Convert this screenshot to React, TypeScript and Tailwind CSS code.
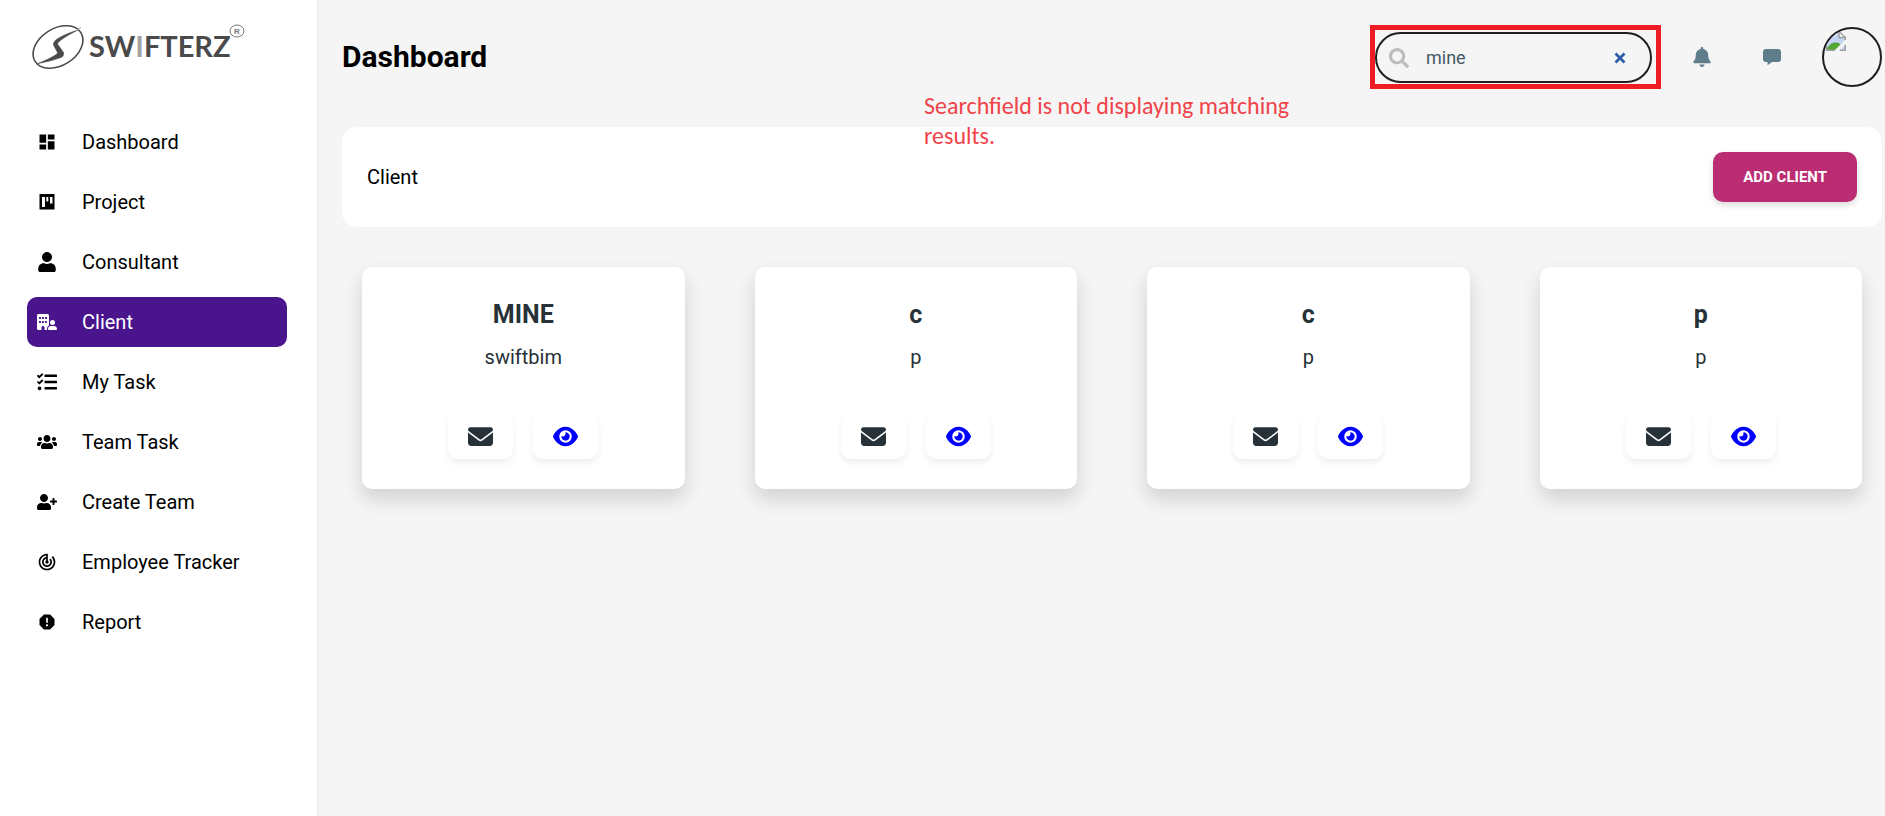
import { useState } from "react";
import type { ComponentType } from "react";
import { MdDashboard, MdTrackChanges, MdReport } from "react-icons/md";
import { FaUser, FaTasks, FaUsers, FaUserPlus, FaSearch, FaBell } from "react-icons/fa";
import { FaBuildingUser, FaEnvelope, FaEye } from "react-icons/fa6";

type IconProps = { size?: number; className?: string };

function BoardIcon({ size = 20, className }: IconProps) {
  return (
    <svg viewBox="0 0 20 20" width={size} height={size} className={className} fill="currentColor" aria-hidden="true">
      <path
        fillRule="evenodd"
        d="M2.500 2 H17.500 V17.500 H2.500 Z M5 5 V15 H8 V5 Z M9.300 5 V9.500 H11.300 V5 Z M13 5 V11.500 H15.500 V5 Z"
      />
    </svg>
  );
}

const navItems: { label: string; icon: ComponentType<IconProps> }[] = [
  { label: "Dashboard", icon: MdDashboard },
  { label: "Project", icon: BoardIcon },
  { label: "Consultant", icon: FaUser },
  { label: "Client", icon: FaBuildingUser },
  { label: "My Task", icon: FaTasks },
  { label: "Team Task", icon: FaUsers },
  { label: "Create Team", icon: FaUserPlus },
  { label: "Employee Tracker", icon: MdTrackChanges },
  { label: "Report", icon: MdReport },
];

const clients = [
  { id: 1, name: "MINE", company: "swiftbim" },
  { id: 2, name: "c", company: "p" },
  { id: 3, name: "c", company: "p" },
  { id: 4, name: "p", company: "p" },
];

function Logo() {
  return (
    <svg viewBox="0 0 214 46" className="h-[46px] w-[214px]" role="img" aria-label="Swifterz">
      <ellipse cx="26" cy="23" rx="27" ry="18.5" transform="rotate(-32 26 23)" fill="none" stroke="#4a4a4a" strokeWidth="1.6" />
      <path d="M46 6 C38 10 31 14 26.500 18 L25.500 20 L31.500 28.500 C32 31 31 32.500 29 33.500 C22 36 14 38 6 39.500 C13 36.500 20 33.500 25 30 L25.500 28.500 L21.500 21 C21.200 19 22.500 17 24.500 15.500 C30 11.500 38 8.500 46 6 Z" fill="#4a4a4a" stroke="#4a4a4a" strokeWidth="0.6" />
      <path d="M43 7.500 L49 3.500" stroke="#a3a3a3" strokeWidth="1" />
      <text x="57" y="33" fontFamily="Lato, sans-serif" fontWeight="700" fontSize="29" fill="#4a4a4a">
        SW<tspan fill="#a3a3a3">I</tspan>FTERZ
      </text>
      <ellipse cx="205" cy="7" rx="7" ry="6" fill="none" stroke="#777777" strokeWidth="1" />
      <text x="205" y="10" textAnchor="middle" fontFamily="Liberation Sans, sans-serif" fontSize="8" fontWeight="700" fill="#777777">R</text>
    </svg>
  );
}

function Sidebar() {
  return (
    <aside className="z-10 w-[317px] shrink-0 bg-white shadow-[0_1px_3px_rgba(0,0,0,0.12)]">
      <div className="pt-6 pl-8">
        <Logo />
      </div>
      <nav className="mt-[47px] flex flex-col gap-[10px] pr-[30px] pl-[27px]">
        {navItems.map(({ label, icon: Icon }) => (
          <a
            key={label}
            href="#"
            aria-current={label === "Client" ? "page" : undefined}
            className={
              label === "Client"
                ? "flex h-[50px] items-center gap-[25px] rounded-[10px] bg-[#4a148c] pl-[10px] text-xl text-white"
                : "flex h-[50px] items-center gap-[25px] rounded-[10px] pl-[10px] text-xl text-black"
            }
          >
            <Icon size={20} className="shrink-0" />
            {label}
          </a>
        ))}
      </nav>
    </aside>
  );
}

function BrokenImage() {
  return (
    <svg viewBox="0 0 20 20" className="h-5 w-5" aria-hidden="true">
      <path d="M0 0 H13 L20 6 V20 H0 Z" fill="#c3d4f7" />
      <path d="M0 0 H13 L10 4 L4 7 L0 11 Z" fill="#f4f4f4" />
      <path d="M0 20 C2 14 6 11.500 9.500 11.500 C13 11.500 14 13 16 15 L9 20 Z" fill="#52a634" />
      <path d="M20 8 L8 20 L13 20 L20 13 Z" fill="#f4f4f4" />
      <path d="M13 0 V6.500 H20" fill="#fff" stroke="#a0a0a0" strokeWidth="1.500" />
      <path d="M13 0.500 L19.300 6.500 V9 M0.500 9 V19.300 H9 M14 19.300 H19.300 V14" fill="none" stroke="#a0a0a0" strokeWidth="1.400" />
    </svg>
  );
}

function Header() {
  const [query, setQuery] = useState("mine");
  return (
    <header className="relative flex h-[114px] items-center justify-between">
      <h1 className="text-[30px] leading-9 font-bold text-black">Dashboard</h1>
      <div className="flex items-center">
        <div className="mr-[26px] border-[5px] border-[#ee1c24] pt-[2px] pr-1 pb-px">
          <label className="flex h-[51px] w-[277px] items-center rounded-full border-2 border-[#1f1f1f] pr-6 pl-3">
            <FaSearch size={20} className="shrink-0 text-[#bdbdbd]" aria-label="Search" />
            <input
              type="text"
              value={query}
              onChange={(event) => setQuery(event.target.value)}
              className="ml-[17px] w-0 flex-1 bg-transparent text-lg text-[#455a64] outline-none"
            />
            <button type="button" aria-label="Clear" onClick={() => setQuery("")}>
              <svg viewBox="0 0 12 12" className="h-3 w-3">
                <path d="M1.500 1.500 L10.500 10.500 M10.500 1.500 L1.500 10.500" stroke="#2f5ea8" strokeWidth="2.800" />
              </svg>
            </button>
          </label>
        </div>
        <button type="button" aria-label="Notifications" className="flex w-[30px] justify-center text-[#607d8b]">
          <FaBell size={20} />
        </button>
        <button type="button" aria-label="Messages" className="ml-10 flex w-[30px] justify-center text-[#607d8b]">
          <svg viewBox="0 0 18 20" className="h-5 w-[18px]" fill="currentColor">
            <path d="M3 2 H15 A3 3 0 0 1 18 5 V12 A3 3 0 0 1 15 15 H9 L4.500 18.300 V15 H3 A3 3 0 0 1 0 12 V5 A3 3 0 0 1 3 2 Z" />
          </svg>
        </button>
        <div className="ml-[35px] h-[60px] w-[60px] overflow-hidden rounded-full border-2 border-[#1f1f1f] pt-[2px] pl-[2px]">
          <BrokenImage />
        </div>
      </div>
      <p className="absolute top-[91px] left-[582px] w-[380px] font-[Carlito,Lato,'Open_Sans',sans-serif] text-2xl leading-[30px] text-[#f0434a]">
        Searchfield is not displaying matching results.
      </p>
    </header>
  );
}

function ClientCard({ name, company }: { name: string; company: string }) {
  return (
    <article className="flex flex-col items-center rounded-[10px] bg-white pt-8 pb-[30px] text-[#263238] shadow-[0_10px_20px_rgba(0,0,0,0.15)]">
      <h2 className="text-[25px] leading-8 font-bold">{name}</h2>
      <p className="mt-3 text-xl leading-7">{company}</p>
      <div className="mt-[42px] flex gap-5">
        <button type="button" aria-label={`Email ${name}`} className="flex h-[46px] w-[65px] items-center justify-center rounded-[10px] bg-white shadow-[0_4px_6px_rgba(38,70,83,0.08)]">
          <FaEnvelope size={25} />
        </button>
        <button type="button" aria-label={`View ${name}`} className="flex h-[46px] w-[65px] items-center justify-center rounded-[10px] bg-white text-[#0000ff] shadow-[0_4px_6px_rgba(38,70,83,0.08)]">
          <FaEye size={25} />
        </button>
      </div>
    </article>
  );
}

export default function App() {
  return (
    <div className="flex min-h-screen bg-[#f5f5f5] font-[Roboto,sans-serif]">
      <Sidebar />
      <main className="min-w-0 flex-1 pr-[3px] pl-[25px]">
        <Header />
        <section className="mt-[13px] flex h-[100px] items-center justify-between rounded-[15px] bg-white px-[25px]">
          <h2 className="text-xl text-black">Client</h2>
          <button type="button" className="h-[50px] rounded-[10px] bg-[#bb2d73] px-[30px] text-[15px] font-bold text-white shadow-[0_3px_6px_rgba(0,0,0,0.15)]">
            ADD CLIENT
          </button>
        </section>
        <section className="mt-10 grid grid-cols-4 gap-x-[70px] px-5">
          {clients.map((client) => (
            <ClientCard key={client.id} name={client.name} company={client.company} />
          ))}
        </section>
      </main>
    </div>
  );
}
